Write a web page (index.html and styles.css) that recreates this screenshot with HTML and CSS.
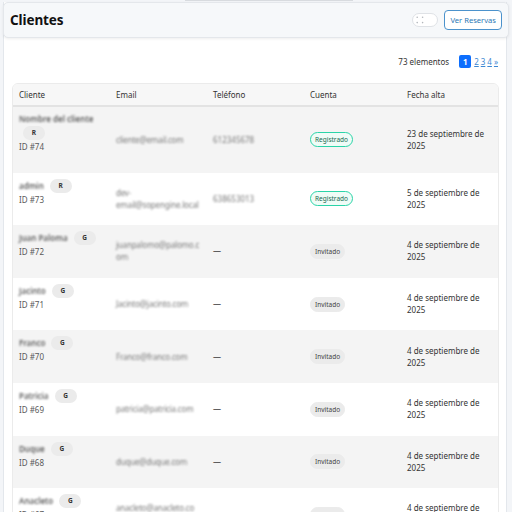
FILE: index.html
```html
<!DOCTYPE html>
<html lang="es">
<head>
<meta charset="utf-8">
<title>Clientes</title>
<link rel="stylesheet" href="styles.css">
</head>
<body>
<div class="topbar"><span class="topbar-thumb"></span></div>
<div class="page">
  <header class="head-card">
    <h1 class="title">Clientes</h1>
    <div class="head-actions">
      <span class="switch">
        <svg class="switch-dots" width="8" height="8" viewBox="0 0 8 8"><circle cx="1.2" cy="1.2" r="0.8"/><circle cx="6.6" cy="1.2" r="0.8"/><circle cx="1.2" cy="6.6" r="0.8"/><circle cx="6.6" cy="6.6" r="0.8"/></svg>
      </span>
      <button class="btn-outline">Ver Reservas</button>
    </div>
  </header>
  <main class="content">
    <div class="pager">
      <span class="pager-count">73 elementos</span>
      <span class="pager-pages">
        <span class="page-current">1</span>
        <a class="page-link" href="#">2</a>
        <a class="page-link" href="#">3</a>
        <a class="page-link" href="#">4</a>
        <a class="page-link" href="#">»</a>
      </span>
    </div>
    <table class="clients">
      <colgroup><col><col><col><col><col></colgroup>
      <thead>
        <tr><th>Cliente</th><th>Email</th><th>Teléfono</th><th>Cuenta</th><th>Fecha alta</th></tr>
      </thead>
      <tbody>
        <tr>
          <td class="c-client"><div class="name-line"><span class="name blur">Nombre del cliente</span><span class="role">R</span></div><div class="cid">ID #74</div></td>
          <td><span class="email blur">cliente@email.com</span></td>
          <td><span class="phone blur">612345678</span></td>
          <td><span class="acct acct-reg">Registrado</span></td>
          <td class="date">23 de septiembre de 2025</td>
        </tr>
        <tr>
          <td class="c-client"><div class="name-line"><span class="name blur">admin</span><span class="role">R</span></div><div class="cid">ID #73</div></td>
          <td><span class="email blur">dev-email@sopengine.local</span></td>
          <td><span class="phone blur">638653013</span></td>
          <td><span class="acct acct-reg">Registrado</span></td>
          <td class="date">5 de septiembre de 2025</td>
        </tr>
        <tr>
          <td class="c-client"><div class="name-line"><span class="name blur">Juan Paloma</span><span class="role">G</span></div><div class="cid">ID #72</div></td>
          <td><span class="email blur">juanpalomo@palomo.com</span></td>
          <td class="dash">—</td>
          <td><span class="acct acct-inv">Invitado</span></td>
          <td class="date">4 de septiembre de 2025</td>
        </tr>
        <tr>
          <td class="c-client"><div class="name-line"><span class="name blur">Jacinto</span><span class="role">G</span></div><div class="cid">ID #71</div></td>
          <td><span class="email blur">Jacinto@jacinto.com</span></td>
          <td class="dash">—</td>
          <td><span class="acct acct-inv">Invitado</span></td>
          <td class="date">4 de septiembre de 2025</td>
        </tr>
        <tr>
          <td class="c-client"><div class="name-line"><span class="name blur">Franco</span><span class="role">G</span></div><div class="cid">ID #70</div></td>
          <td><span class="email blur">Franco@franco.com</span></td>
          <td class="dash">—</td>
          <td><span class="acct acct-inv">Invitado</span></td>
          <td class="date">4 de septiembre de 2025</td>
        </tr>
        <tr>
          <td class="c-client"><div class="name-line"><span class="name blur">Patricia</span><span class="role">G</span></div><div class="cid">ID #69</div></td>
          <td><span class="email blur">patricia@patricia.com</span></td>
          <td class="dash">—</td>
          <td><span class="acct acct-inv">Invitado</span></td>
          <td class="date">4 de septiembre de 2025</td>
        </tr>
        <tr>
          <td class="c-client"><div class="name-line"><span class="name blur">Duque</span><span class="role">G</span></div><div class="cid">ID #68</div></td>
          <td><span class="email blur">duque@duque.com</span></td>
          <td class="dash">—</td>
          <td><span class="acct acct-inv">Invitado</span></td>
          <td class="date">4 de septiembre de 2025</td>
        </tr>
        <tr>
          <td class="c-client"><div class="name-line"><span class="name blur">Anacleto</span><span class="role">G</span></div><div class="cid">ID #67</div></td>
          <td><span class="email blur">anacleto@anacleto.com</span></td>
          <td class="dash">—</td>
          <td><span class="acct acct-inv">Invitado</span></td>
          <td class="date">4 de septiembre de 2025</td>
        </tr>
      </tbody>
    </table>
  </main>
</div>
</body>
</html>
```
FILE: styles.css
```css
* { box-sizing: border-box; }

body {
  margin: 0;
  background: #f3f5f8;
  font-family: "Noto Sans", "Open Sans", sans-serif;
  font-size: 8px;
  color: #333;
  overflow: hidden;
}

.topbar {
  height: 2px;
}

.topbar-thumb {
  display: block;
  margin-left: 185px;
  width: 168px;
  height: 1px;
  background: #d8dbdf;
}

.page {
  margin-left: 3px;
  width: 504px;
  min-height: 520px;
  background: #fff;
  border-left: 1px solid #e3e7ec;
  border-right: 1px solid #e3e7ec;
}

.head-card {
  margin: 0 -3px 0 -1px;
  height: 36px;
  padding: 0 6px 0 6px;
  display: flex;
  align-items: center;
  justify-content: space-between;
  background: #f6f8fa;
  border: 1px solid #e4e7eb;
  border-radius: 5px;
  box-shadow: 0 1px 3px rgba(0, 0, 0, 0.07);
}

.title {
  margin: 0;
  font-size: 13.5px;
  font-weight: 700;
  color: #111;
  letter-spacing: -0.1px;
}

.head-actions {
  display: flex;
  align-items: center;
  gap: 6px;
}

.switch {
  width: 26px;
  height: 14px;
  border: 1px solid #dfe2e6;
  border-radius: 7px;
  background: #fff;
  display: flex;
  align-items: center;
  padding-left: 3px;
}

.switch-dots {
  fill: #b3b7bc;
}

.btn-outline {
  height: 20px;
  padding: 0 5px;
  font-family: inherit;
  font-size: 7.6px;
  color: #2a78b6;
  background: #fff;
  border: 1px solid #4b92cc;
  border-radius: 4px;
}

.content {
  padding: 17px 8px 0 8px;
}

.pager {
  height: 13px;
  display: flex;
  justify-content: flex-end;
  align-items: center;
  gap: 10px;
  margin-bottom: 15px;
}

.pager-count {
  color: #333;
}

.pager-pages {
  display: flex;
  align-items: center;
  gap: 2px;
}

.page-current {
  width: 12px;
  height: 13px;
  border-radius: 2px;
  background: #0d6efd;
  color: #fff;
  font-weight: 700;
  display: flex;
  align-items: center;
  justify-content: center;
  margin-right: 1px;
}

.page-link {
  color: #3d88d3;
  text-decoration: underline;
}

.clients {
  width: 485px;
  table-layout: fixed;
  border-collapse: separate;
  border-spacing: 0;
  border: 1px solid #ebebeb;
  border-radius: 6px;
  overflow: hidden;
}

.clients col {
  width: 97px;
}

.clients th {
  height: 23px;
  padding: 0 6px;
  text-align: left;
  font-weight: 400;
  color: #333;
  background: #f7f7f7;
  border-bottom: 2px solid #e3e3e3;
}

.clients td {
  padding: 0 6px;
  vertical-align: middle;
  line-height: 12px;
}

.clients tbody tr:nth-child(odd) td {
  background: #f4f4f4;
}

.clients td.c-client {
  vertical-align: top;
  padding-top: 6px;
  padding-bottom: 19.6px;
}

.name-line {
  display: flex;
  flex-wrap: wrap;
  align-items: center;
  column-gap: 2px;
  row-gap: 1px;
  min-height: 14px;
}

.blur {
  filter: blur(1.1px);
}

.name {
  font-weight: 600;
  color: #5e5e5e;
}

.role {
  margin-left: 4px;
  width: 22px;
  height: 14px;
  border-radius: 7px;
  background: #ebebeb;
  color: #333;
  font-size: 6.5px;
  font-weight: 700;
  display: inline-flex;
  align-items: center;
  justify-content: center;
}

.cid {
  margin-top: 1px;
  color: #5a5a5a;
}

.email {
  display: block;
  color: #7a7a7a;
  letter-spacing: -0.2px;
  overflow-wrap: anywhere;
}

.phone {
  color: #7a7a7a;
}

.dash {
  color: #333;
}

.acct {
  display: inline-block;
  height: 15px;
  line-height: 13px;
  padding: 0 4px;
  border-radius: 8px;
  font-size: 6.5px;
}

.acct-reg {
  border: 1px solid #2bd4a8;
  background: #effcf7;
  color: #17694f;
}

.acct-inv {
  border: 1px solid #ebebeb;
  background: #ebebeb;
  color: #444;
}

.date {
  color: #333;
}
```
